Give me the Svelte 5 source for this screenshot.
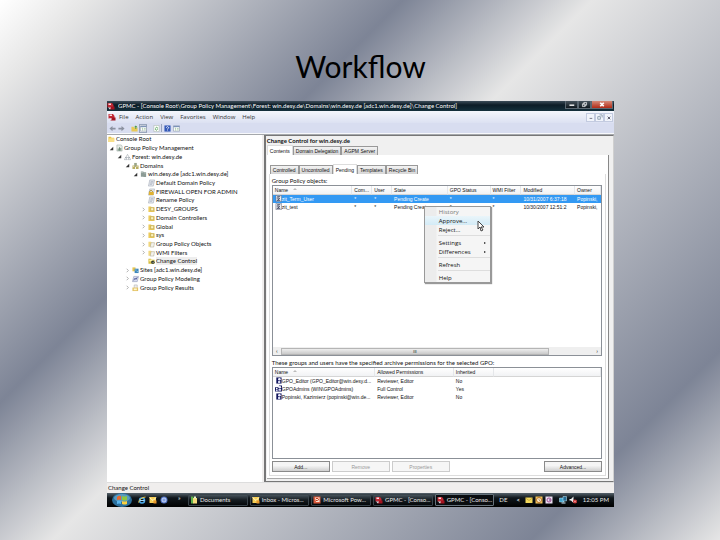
<script lang="ts">
  const menus = ['File', 'Action', 'View', 'Favorites', 'Window', 'Help'];

  const tree = [
    { label: 'Console Root', depth: 0, icon: 'folder', mark: '' },
    { label: 'Group Policy Management', depth: 1, icon: 'chart', mark: 'open' },
    { label: 'Forest: win.desy.de', depth: 2, icon: 'forest', mark: 'open' },
    { label: 'Domains', depth: 3, icon: 'domains', mark: 'open' },
    { label: 'win.desy.de [adc1.win.desy.de]', depth: 4, icon: 'server', mark: 'open' },
    { label: 'Default Domain Policy', depth: 5, icon: 'policy', mark: '' },
    { label: 'FIREWALL OPEN FOR ADMIN', depth: 5, icon: 'lock', mark: '' },
    { label: 'Rename Policy', depth: 5, icon: 'policy', mark: '' },
    { label: 'DESY_GROUPS', depth: 5, icon: 'unit', mark: 'closed' },
    { label: 'Domain Controllers', depth: 5, icon: 'unit', mark: 'closed' },
    { label: 'Global', depth: 5, icon: 'unit', mark: 'closed' },
    { label: 'sys', depth: 5, icon: 'unit', mark: 'closed' },
    { label: 'Group Policy Objects', depth: 5, icon: 'objects', mark: 'closed' },
    { label: 'WMI Filters', depth: 5, icon: 'objects', mark: 'closed' },
    { label: 'Change Control', depth: 5, icon: 'change', mark: '', selected: true },
    { label: 'Sites [adc1.win.desy.de]', depth: 3, icon: 'sites', mark: 'closed' },
    { label: 'Group Policy Modeling', depth: 3, icon: 'model', mark: 'closed' },
    { label: 'Group Policy Results', depth: 3, icon: 'results', mark: 'closed' }
  ];

  const gpoColumns = [
    { label: 'Name', width: 80 },
    { label: 'Com...', width: 20 },
    { label: 'User', width: 20 },
    { label: 'State', width: 56 },
    { label: 'GPO Status', width: 43 },
    { label: 'WMI Filter', width: 31 },
    { label: 'Modified', width: 54 },
    { label: 'Owner', width: 26 }
  ];
  const gpos = [
    ['zit_Term_User', '*', '*', 'Pending Create', '*', '*', '10/31/2007 6:37:18', 'Popinski,'],
    ['zit_test', '*', '*', 'Pending Create', '*', '*', '10/30/2007 12:51:2', 'Popinski,']
  ];

  const permColumns = [
    { label: 'Name', width: 103 },
    { label: 'Allowed Permissions', width: 79 },
    { label: 'Inherited', width: 40 },
    { label: '', width: 108 }
  ];
  const perms = [
    ['GPO_Editor (GPO_Editor@win.desy.d...', 'Reviewer, Editor', 'No'],
    ['GPOAdmins (WIN\\GPOAdmins)', 'Full Control', 'Yes'],
    ['Popinski, Kazimierz (popinski@win.de...', 'Reviewer, Editor', 'No']
  ];

  const tasks = [
    { label: 'Documents', icon: 'docs' },
    { label: 'Inbox - Micros...', icon: 'mail' },
    { label: 'Microsoft Pow...', icon: 'ppt' },
    { label: 'GPMC - [Conso...', icon: 'gpmc' },
    { label: 'GPMC - [Conso...', icon: 'gpmc', active: true }
  ];

  const pct = (w: number) => `width: ${(w / 330) * 100}%`;
</script>

{#snippet icon(name: string)}
  <svg class="icon" viewBox="0 0 16 16" aria-hidden="true">
    {#if name === 'folder'}
      <path d="M1 3h6l1 2h6v10H1z" fill="#e9c44d" />
      <path d="M3 6h12l-1 9H1z" fill="#f8e08a" />
    {:else if name === 'chart'}
      <path d="M2 1h10l2 3v11H2z" fill="#e8ece8" stroke="#8a9a90" />
      <path d="M4 9h2v5H4zM7 6h2v8H7zM10 8h2v6h-2z" fill="#5d7f6c" />
    {:else if name === 'forest'}
      <path d="M8 2 4 9h8zM4 8l-3 6h6zM12 8l-3 6h6z" fill="#fff" stroke="#7d8790" />
    {:else if name === 'domains'}
      <path d="M5 1h6v9H5z" fill="#9aa58a" />
      <path d="M1 7h6v8H1zM9 7h6v8H9z" fill="#b9ae62" />
      <path d="M2 9h3v1H2zM10 9h3v1h-3z" fill="#fff" />
    {:else if name === 'server'}
      <path d="M2 2h6v12H2zM8 4h6v11H8z" fill="#8d9c96" />
      <path d="M3 4h3v1H3zM10 6h3v1h-3z" fill="#eef4f0" />
    {:else if name === 'policy'}
      <path d="M4 1h11l-3 14H1z" fill="#e6e9ee" stroke="#8a93a3" />
      <path d="M6 5h6M5 8h6M4 11h5" stroke="#77839b" />
    {:else if name === 'lock'}
      <path d="M4 1h11l-3 14H1z" fill="#e6e9ee" stroke="#8a93a3" />
      <path d="M4 8V6q3-4 6 0v2" fill="none" stroke="#a98a22" stroke-width="2" />
      <path d="M2 8h11v7H2z" fill="#e0b22f" />
    {:else if name === 'unit'}
      <path d="M1 2h6l1 2h7v11H1z" fill="#ecca5b" />
      <path d="M6 5h7v7H6z" fill="#fdf3bd" stroke="#a08932" />
    {:else if name === 'objects'}
      <path d="M1 3h6l1 2h5v9H1z" fill="#f1d77e" />
      <path d="M7 5h8l-2 10H5z" fill="#f2f2ee" stroke="#a09a80" />
    {:else if name === 'change'}
      <path d="M1 3h6l1 2h7v9H1z" fill="#d7bd42" />
      <path d="M3 5h9v4H3z" fill="#fff5b0" />
      <circle cx="11" cy="11" r="4" fill="#303a2a" />
      <path d="m9 11 2 2 3-4" fill="none" stroke="#fff" />
    {:else if name === 'sites'}
      <path d="M1 2h7v9H1z" fill="#e5c552" />
      <path d="M6 5h9v10H6z" fill="#3c86bb" />
      <path d="M8 7h2v2H8zM11 10h2v2h-2z" fill="#c9ecf8" />
    {:else if name === 'model'}
      <path d="M4 2h11l-3 12H1z" fill="#d8dcef" stroke="#7781a8" />
      <path d="m4 11 3-5 2 3 3-5" fill="none" stroke="#4a5796" stroke-width="2" />
    {:else if name === 'results'}
      <path d="M5 1h7v8H5z" fill="#eee" stroke="#999" />
      <path d="M1 7h13v8H1z" fill="#e3c265" />
      <path d="M4 9h7v4H4z" fill="#fff6cf" />
    {:else if name === 'script'}
      <path d="M2 1h13v14H2z" fill="#f3f4f8" stroke="#444d66" />
      <path d="M5 4h7M4 7h5M4 12h8M11 7l-5 5" stroke="#27304c" stroke-width="2" />
    {:else if name === 'group'}
      <path d="M3 1h12v14H3z" fill="#10145c" />
      <circle cx="10" cy="5" r="3" fill="#f2f2ff" />
      <path d="M7 9h5v5H7z" fill="#d9dcf4" />
    {:else if name === 'groups'}
      <path d="M0 5h9V1h7v14H0z" fill="#10145c" />
      <circle cx="11" cy="5" r="3" fill="#f2f2ff" />
      <circle cx="4" cy="8" r="2" fill="#fff" />
      <path d="M8 9h6v4H8zM2 11h4v3H2z" fill="#d9dcf4" />
    {:else if name === 'gpmc'}
      <path d="M1 2h9l3 4v5H1z" fill="#c22a35" />
      <path d="M3 3h5v3H3z" fill="#f7dde0" />
      <path d="M7 9h8v6H5z" fill="#a3121f" />
      <path d="M2 11h6l-2 4z" fill="#e8e8ee" />
    {:else if name === 'docs'}
      <path d="M2 1h5v14H2z" fill="#5eb24a" />
      <path d="M6 4h8v11H6z" fill="#f5dc7c" />
      <path d="M8 1h4v4H8z" fill="#e9f3d4" />
    {:else if name === 'mail'}
      <path d="M1 2h13v12H1z" fill="#f6cf55" />
      <path d="m1 3 7 6 6-6" fill="none" stroke="#fff6d0" stroke-width="2" />
      <path d="M9 9h6v6H9z" fill="#e8972d" />
    {:else if name === 'ppt'}
      <path d="M1 1h14v14H1z" fill="#d9583a" />
      <path d="M4 3h9v9H6z" fill="#fbe3d6" />
      <path d="M6 5h4q3 3-1 4H6" fill="none" stroke="#c5401f" stroke-width="2" />
    {:else if name === 'ie'}
      <circle cx="8" cy="9" r="5" fill="none" stroke="#4aa8ea" stroke-width="3" />
      <path d="M4 9h9" stroke="#9fd6f8" stroke-width="2" />
      <path d="M1 13Q4 3 15 2" fill="none" stroke="#e8c544" stroke-width="2" />
    {:else if name === 'globe'}
      <circle cx="8" cy="8" r="7" fill="#5577c8" />
      <circle cx="8" cy="8" r="4" fill="none" stroke="#d5e0fa" stroke-width="2" />
      <circle cx="8" cy="8" r="2" fill="#8fb0f0" />
    {:else if name === 'note'}
      <path d="M1 3h14v11H1z" fill="#f3d95c" />
      <path d="m1 4 7 5 7-5" fill="none" stroke="#9e7d1e" />
    {:else if name === 'clock'}
      <path d="M1 1h14v14H1z" fill="#f0c65a" />
      <circle cx="8" cy="8" r="5" fill="#fff3d4" stroke="#bd7127" stroke-width="2" />
      <path d="M8 5v3l2 2" fill="none" stroke="#7b4a22" />
    {:else if name === 'agent'}
      <path d="M1 1h14v14H1z" fill="#e9def0" />
      <circle cx="8" cy="8" r="4" fill="none" stroke="#a25292" stroke-width="2" />
      <path d="M8 8h3" stroke="#613a88" stroke-width="2" />
    {:else if name === 'network'}
      <path d="M1 4h9v8H1z" fill="#3da2cc" stroke="#c6eefc" />
      <path d="M8 1h7v9H8z" fill="#246a92" stroke="#c6eefc" />
      <path d="M5 14h8" stroke="#d0f0ff" stroke-width="2" />
    {:else if name === 'sound'}
      <path d="M1 6h3l5-5v13l-5-5H1z" fill="#f2f2f2" />
      <circle cx="12" cy="11" r="4" fill="#cf2a2a" />
      <path d="m10 9 4 4M14 9l-4 4" stroke="#fff" />
    {:else if name === 'back'}
      <path d="M1 8 8 2v4h7v4H8v4z" fill="#8b91a0" />
    {:else if name === 'forward'}
      <path d="M15 8 8 2v4H1v4h7v4z" fill="#8b91a0" />
    {:else if name === 'up'}
      <path d="M1 4h5l1 2h8v9H1z" fill="#e9ca58" />
      <path d="m11 1 4 4h-3v4h-2V5H7z" fill="#4d9a3c" />
    {:else if name === 'panes'}
      <path d="M1 2h14v12H1z" fill="#fff" stroke="#66758c" />
      <path d="M1 2h14v3H1z" fill="#7d94b8" />
      <path d="M4 7h2v6M9 8h4M9 11h4" fill="none" stroke="#5c9a62" />
    {:else if name === 'refresh'}
      <path d="M2 1h12v14H2z" fill="#fff" stroke="#98a898" />
      <path d="M5 8q3-5 6-1M11 9q-3 5-6 1" fill="none" stroke="#3e9a42" stroke-width="2" />
    {:else if name === 'help'}
      <path d="M1 1h14v14H1z" fill="#3459b8" />
      <path d="M5 6q3-5 6 0-1 2-3 3v1M8 12v1" fill="none" stroke="#fff" stroke-width="2" />
    {/if}
  </svg>
{/snippet}

<main class="slide">
  <h1>Workflow</h1>

  <div class="screen">
    <header class="titlebar">
      {@render icon('gpmc')}
      <span class="caption">GPMC - [Console Root\Group Policy Management\Forest: win.desy.de\Domains\win.desy.de [adc1.win.desy.de]\Change Control]</span>
      <div class="window-buttons">
        <button aria-label="Minimize"><svg viewBox="0 0 16 8"><path d="M5 4h7v2H5z" fill="#fff" /></svg></button>
        <button aria-label="Restore"><svg viewBox="0 0 16 8"><path d="M7 1h4v4H7zM5 3h4v4H5z" fill="#27333c" stroke="#fff" /></svg></button>
        <button class="close" aria-label="Close"><svg viewBox="0 0 16 8"><path d="m6 2 4 4M10 2 6 6" stroke="#fff" stroke-width="2" /></svg></button>
      </div>
    </header>

    <nav class="menubar">
      {@render icon('gpmc')}
      {#each menus as menu}
        <button>{menu}</button>
      {/each}
      <div class="child-buttons">
        <button aria-label="Minimize child"><svg viewBox="0 0 8 8"><path d="M3 5h3" stroke="#667" /></svg></button>
        <button aria-label="Restore child"><svg viewBox="0 0 8 8"><path d="M2 3h3v3H2zM4 1h3v3" fill="none" stroke="#89a" /></svg></button>
        <button aria-label="Close child"><svg viewBox="0 0 8 8"><path d="m3 3 3 3M6 3 3 6" stroke="#445" /></svg></button>
      </div>
    </nav>

    <div class="toolbar">
      <button aria-label="Back">{@render icon('back')}</button>
      <button aria-label="Forward">{@render icon('forward')}</button>
      <span class="gap"></span>
      <button aria-label="Up one level">{@render icon('up')}</button>
      <button class="pressed" aria-label="Show tree">{@render icon('panes')}</button>
      <span class="gap"></span>
      <button aria-label="Refresh">{@render icon('refresh')}</button>
      <span class="rule"></span>
      <button aria-label="Help">{@render icon('help')}</button>
      <button aria-label="Show panes">{@render icon('panes')}</button>
    </div>

    <div class="body">
      <ul class="tree">
        {#each tree as node}
          <li style="padding-left: {Math.max(node.depth - 1, 0) * 8}px">
            {#if node.depth}
              <svg class="mark" viewBox="0 0 8 8" aria-hidden="true">
                {#if node.mark === 'open'}
                  <path d="M6 2v4H2z" fill="#333" />
                {:else if node.mark === 'closed'}
                  <path d="m3 2 2 2-2 2" fill="none" stroke="#a5a5a5" />
                {/if}
              </svg>
            {/if}
            {@render icon(node.icon)}
            <span class:selected={node.selected}>{node.label}</span>
          </li>
        {/each}
      </ul>

      <section class="details">
        <h2>Change Control for win.desy.de</h2>
        <div class="tabs">
          <button class="active">Contents</button>
          <button>Domain Delegation</button>
          <button>AGPM Server</button>
        </div>

        <div class="page">
          <div class="tabs inner">
            <button>Controlled</button>
            <button>Uncontrolled</button>
            <button class="active">Pending</button>
            <button>Templates</button>
            <button>Recycle Bin</button>
          </div>

          <div class="pending">
            <p>Group Policy objects:</p>
            <div class="list gpos">
              <table>
                <thead>
                  <tr>
                    {#each gpoColumns as col, i}
                      <th style={pct(col.width)}>{col.label}{#if i === 0}<i class="sort"></i>{/if}</th>
                    {/each}
                  </tr>
                </thead>
                <tbody>
                  {#each gpos as row, r}
                    <tr class:current={r === 0}>
                      {#each row as cell, i}
                        <td>{#if i === 0}{@render icon('script')}{/if}{cell}</td>
                      {/each}
                    </tr>
                  {/each}
                </tbody>
              </table>
              <div class="scrollbar">
                <span>‹</span>
                <div class="track"><div class="thumb">III</div></div>
                <span>›</span>
              </div>

              <div class="context" role="menu">
                <button role="menuitem" disabled>History</button>
                <button role="menuitem" class="hover">Approve...</button>
                <button role="menuitem">Reject...</button>
                <hr />
                <button role="menuitem">Settings<i class="arrow"></i></button>
                <button role="menuitem">Differences<i class="arrow"></i></button>
                <hr />
                <button role="menuitem">Refresh</button>
                <hr />
                <button role="menuitem">Help</button>
                <svg class="cursor" viewBox="0 0 8 12" aria-hidden="true">
                  <path d="M1 1v8l2-2 1 4 2-1-2-3h3z" fill="#fff" stroke="#444" />
                </svg>
              </div>
            </div>

            <p class="note">These groups and users have the specified archive permissions for the selected GPO:</p>
            <div class="list perms">
              <table>
                <thead>
                  <tr>
                    {#each permColumns as col, i}
                      <th style={pct(col.width)}>{col.label}{#if i === 0}<i class="sort"></i>{/if}</th>
                    {/each}
                  </tr>
                </thead>
                <tbody>
                  {#each perms as row, r}
                    <tr>
                      {#each row as cell, i}
                        <td>{#if i === 0}{@render icon(r === 1 ? 'groups' : 'group')}{/if}{cell}</td>
                      {/each}
                    </tr>
                  {/each}
                </tbody>
              </table>
            </div>

            <div class="actions">
              <button>Add...</button>
              <button disabled>Remove</button>
              <button disabled>Properties</button>
              <button class="advanced">Advanced...</button>
            </div>
          </div>
        </div>
      </section>
    </div>

    <footer class="status">Change Control</footer>

    <div class="taskbar">
      <button class="start" aria-label="Start">
        <svg viewBox="0 0 20 14">
          <ellipse cx="10" cy="7" rx="10" ry="7" fill="#2b6f9c" />
          <ellipse cx="10" cy="5" rx="8" ry="4" fill="#7cb7d4" opacity="0.6" />
          <path d="M5 4q2-2 4-1v4q-2-1-4 0z" fill="#e9662c" />
          <path d="M10 3q2 1 5 0v4q-2 1-5 0z" fill="#8dc63f" />
          <path d="M5 8q2-1 4 0v3q-2-1-4 0z" fill="#58b5ee" />
          <path d="M10 8q2 1 5 0v3q-2 1-5 0z" fill="#fbd13e" />
        </svg>
      </button>
      <div class="quick">
        {@render icon('ie')}
        {@render icon('mail')}
        {@render icon('globe')}
        <span>»</span>
      </div>
      <div class="tasks">
        {#each tasks as task}
          <button class:active={task.active}>{@render icon(task.icon)}<span>{task.label}</span></button>
        {/each}
      </div>
      <div class="tray">
        <span>DE</span>
        <b>&lt;</b>
        {@render icon('note')}
        {@render icon('clock')}
        {@render icon('agent')}
        <i></i>
        {@render icon('network')}
        {@render icon('sound')}
        <time>12:05 PM</time>
      </div>
    </div>
  </div>
</main>

<style>
  :global(body) {
    background: #7d8496;
  }

  * {
    box-sizing: border-box;
  }

  .slide {
    min-height: 100vh;
    padding: 0 106px 32px 107px;
    background: linear-gradient(135deg, #fff 0%, #e6e6e6 7%, #7d8496 32%, #e6e6e6 47%, #7d8496 85%, #e6e6e6 100%);
    font-family: Lato, "Open Sans", sans-serif;
    font-size: 6px;
    line-height: 8px;
    color: #111;
  }

  h1 {
    margin: 0;
    padding: 46px 0 15px;
    font: 400 30px/40px Lato, sans-serif;
    text-align: center;
    color: #000;
  }

  h2,
  p {
    margin: 0;
    white-space: nowrap;
  }

  button {
    margin: 0;
    padding: 0;
    border: 0;
    background: none;
    font: inherit;
    color: inherit;
    white-space: nowrap;
  }

  svg {
    display: block;
  }

  .icon {
    flex: none;
    width: 8px;
    height: 8px;
  }

  .screen {
    background: #f0eeed;
  }

  .titlebar {
    display: flex;
    align-items: center;
    gap: 3px;
    height: 10px;
    background: linear-gradient(#3c4c58, #0c1c26 40%, #14303c);
    color: #fff;
  }

  .caption {
    flex: 1;
    overflow: hidden;
    white-space: nowrap;
  }

  .window-buttons {
    display: flex;
    align-self: flex-start;
    margin-right: 1px;
  }

  .window-buttons button {
    width: 13px;
    height: 8px;
    border: 1px solid #5b6872;
    border-top: 0;
    background: linear-gradient(#46535c, #10191f);
  }

  .window-buttons .close {
    width: 22px;
    background: linear-gradient(#d68a78, #b12a16);
  }

  .window-buttons svg {
    width: 100%;
    height: 7px;
  }

  .menubar {
    display: flex;
    align-items: center;
    gap: 7px;
    height: 12px;
    padding-left: 1px;
    background: linear-gradient(#f4f6fc, #dce1f2);
    font-family: "Open Sans", sans-serif;
    color: #333;
  }

  .menubar > .icon {
    margin-right: -4px;
  }

  .child-buttons {
    display: flex;
    margin-left: auto;
    margin-right: 1px;
  }

  .child-buttons button {
    width: 9px;
    height: 9px;
    border: 1px solid #c3cbe0;
    background: #f1f4fb;
  }

  .child-buttons svg {
    width: 7px;
    height: 7px;
  }

  .toolbar {
    display: flex;
    align-items: center;
    gap: 1px;
    height: 11px;
    padding-left: 1px;
    border-bottom: 1px solid #f7f8fb;
    background: #d8ddf0;
  }

  .toolbar .icon {
    width: 7px;
    height: 7px;
    margin: 0 auto;
  }

  .toolbar button {
    width: 8px;
  }

  .toolbar .gap {
    width: 3px;
  }

  .toolbar .pressed {
    border: 1px solid #9aa7bd;
    background: #eef1f8;
  }

  .toolbar .rule {
    width: 1px;
    height: 8px;
    background: #9aa5bb;
  }

  .body {
    display: flex;
    min-height: 348px;
    border-top: 1px solid #a5a8ac;
  }

  .tree {
    display: grid;
    flex: 31 1 0;
    grid-template-rows: repeat(18, 1fr);
    margin: 0;
    padding: 0 0 190px 1px;
    list-style: none;
    background: #fff;
  }

  .tree li {
    display: flex;
    align-items: center;
    white-space: nowrap;
  }

  .tree .mark {
    width: 7px;
    height: 7px;
    margin-right: 1px;
  }

  .tree .icon {
    width: 7px;
  }

  .tree span {
    margin-left: 1px;
  }

  .tree .selected {
    background: #eee;
  }

  .details {
    display: flex;
    flex-direction: column;
    flex: 69 1 0;
    min-width: 0;
    margin-left: 2px;
    padding: 1px 4px 2px 1px;
    border: 1px solid #777;
    border-width: 1px 1px 1px 2px;
    border-right-color: #d0d0d0;
    background: #f0f0f0;
  }

  h2 {
    font: 700 6px/8px Lato, sans-serif;
  }

  .tabs {
    display: flex;
    align-items: flex-end;
    height: 10px;
    background: #f0f0f0;
  }

  .tabs.inner {
    height: 16px;
    padding-left: 1px;
    background: #fff;
  }

  .tabs button {
    height: 9px;
    padding: 0 2px;
    border: 1px solid #999;
    border-bottom: 0;
    background: linear-gradient(#f3f3f3, #d6d6d6);
  }

  .tabs .active {
    height: 10px;
    border-color: #ddd;
    background: #fff;
  }

  .tabs,
  table,
  .actions {
    font-family: "Liberation Sans", Arial, sans-serif;
    font-size: 5px;
  }

  .page {
    display: flex;
    flex-direction: column;
    flex: 1;
    padding: 3px 2px 2px;
    border-right: 1px solid #888;
    border-bottom: 1px solid #aaa;
    background: #fff;
  }

  .pending {
    display: flex;
    flex-direction: column;
    flex: 1;
    padding: 3px 3px 3px 2px;
    border: 1px solid #ddd;
    border-top: 0;
  }

  .list {
    position: relative;
    display: flex;
    flex-direction: column;
    border: 1px solid #8b9097;
    background: #fff;
  }

  .gpos {
    height: 171px;
  }

  .perms {
    height: 92px;
  }

  .note {
    margin-top: 3px;
  }

  table {
    width: 100%;
    table-layout: fixed;
    border-spacing: 0;
  }

  th,
  td {
    height: 8px;
    padding: 0 0 0 2px;
    overflow: hidden;
    font-weight: 400;
    text-align: left;
    white-space: nowrap;
  }

  th {
    height: 9px;
    border-right: 1px solid #e5e7ea;
    border-bottom: 1px solid #d5d5d5;
    background: linear-gradient(#fff, #f1f2f4);
  }

  td .icon {
    display: inline-block;
    width: 7px;
    height: 7px;
    vertical-align: top;
  }

  .current td {
    background: #3399f3;
    color: #fff;
  }

  .sort {
    display: inline-block;
    margin: 0 0 2px 5px;
    border: 2px solid transparent;
    border-top: 0;
    border-bottom: 2px solid #bbb;
  }

  .scrollbar {
    display: flex;
    align-items: center;
    height: 8px;
    margin-top: auto;
    background: #efefef;
    text-align: center;
  }

  .scrollbar span {
    width: 8px;
  }

  .track {
    flex: 1;
  }

  .thumb {
    width: 86%;
    height: 7px;
    border: 1px solid #b5b5b5;
    background: linear-gradient(#eee, #c9c9c9);
    font-size: 4px;
    line-height: 5px;
  }

  .context {
    position: absolute;
    top: 20px;
    left: 46%;
    display: flex;
    flex-direction: column;
    width: 67px;
    border: 1px solid #999;
    background: linear-gradient(90deg, #ececec 11px, #f5f5f5 12px);
    box-shadow: 1px 1px 1px #999;
    font-family: "Open Sans", sans-serif;
  }

  .context button {
    display: flex;
    align-items: center;
    justify-content: space-between;
    height: 9px;
    padding: 0 4px 0 14px;
  }

  .context button:disabled {
    color: #777;
  }

  .context .hover {
    background: linear-gradient(#eaf5fa, #d3ebf6);
  }

  .context hr {
    width: 80%;
    margin: 1px 0 2px auto;
    border: 0;
    border-top: 1px solid #ddd;
  }

  .arrow {
    border: 1px solid transparent;
    border-left: 2px solid #222;
    border-right: 0;
  }

  .cursor {
    position: absolute;
    top: 13px;
    left: 52px;
    width: 8px;
    height: 12px;
  }

  .actions {
    display: flex;
    gap: 2px;
    margin-top: 2px;
  }

  .actions button {
    flex: 0 1 58px;
    height: 11px;
    border: 1px solid #8a8a8a;
    background: linear-gradient(#f5f5f5 40%, #cfcfcf);
  }

  .actions button:disabled {
    border-color: #ccc;
    background: #f6f6f6;
    color: #999;
  }

  .actions .advanced {
    margin-left: auto;
  }

  .status {
    height: 11px;
    padding: 1px;
    border-top: 1px solid #ddd;
  }

  .taskbar {
    display: flex;
    align-items: center;
    height: 14px;
    padding: 0 5px;
    background: linear-gradient(#56626b, #10171c 35%, #000);
    color: #e8e8e8;
    white-space: nowrap;
  }

  .start svg {
    width: 20px;
    height: 14px;
  }

  .quick {
    display: flex;
    gap: 3px;
    width: 56px;
    padding-left: 6px;
  }

  .quick span {
    margin: -2px 0 0 7px;
  }

  .tasks {
    display: flex;
    flex: 1;
    gap: 2px;
  }

  .tasks button {
    display: flex;
    flex: 1 1 0;
    align-items: center;
    gap: 2px;
    min-width: 0;
    height: 12px;
    padding-left: 1px;
    border: 1px solid #3a444b;
    border-radius: 1px;
    background: linear-gradient(#46525a, #151c21 50%, #05080a);
    overflow: hidden;
  }

  .tasks .active {
    border-color: #66727b;
    background: #0a0d10;
  }

  .tray {
    display: flex;
    align-items: center;
    gap: 2px;
    padding-left: 5px;
  }

  .tray b {
    margin: 0 3px 0 7px;
  }

  .tray i {
    width: 2px;
  }

  .tray time {
    margin-left: 4px;
  }
</style>
